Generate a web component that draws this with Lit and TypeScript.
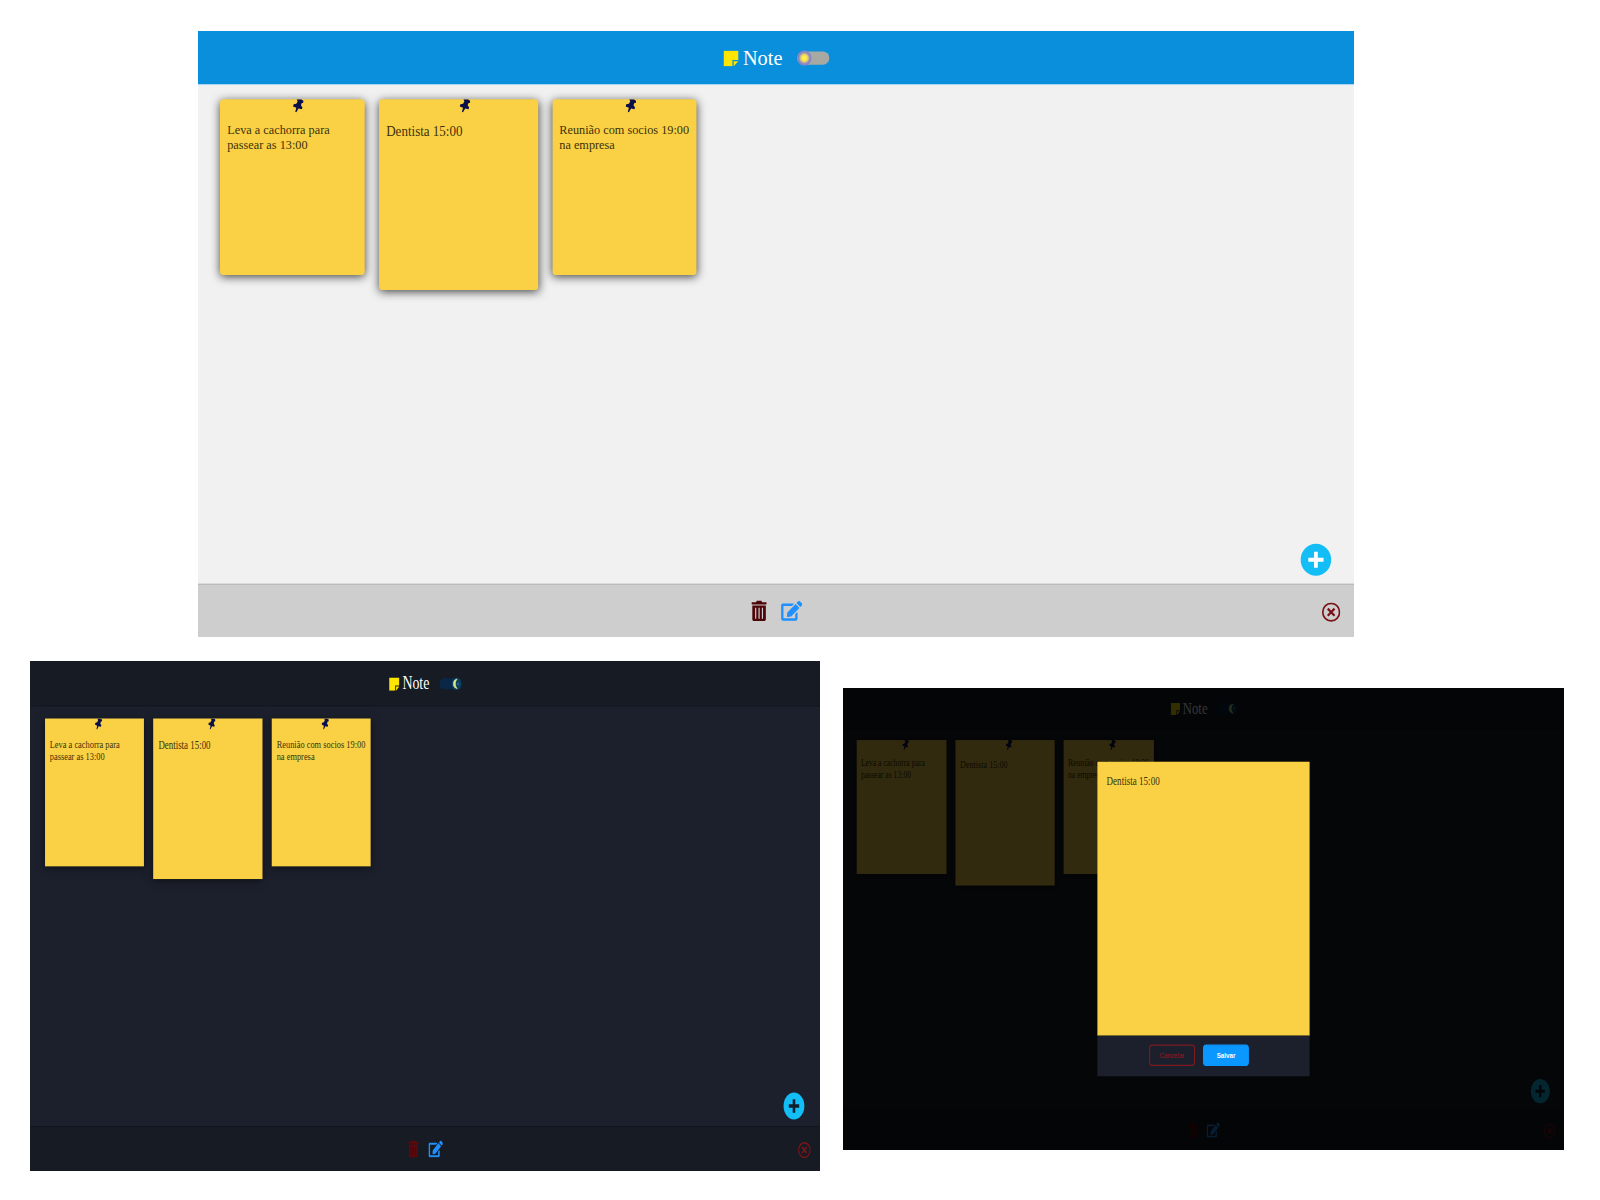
import { LitElement, html, css, svg, nothing } from "lit";
import { customElement, property } from "lit/decorators.js";

interface Note {
  text: string;
  active?: boolean;
}

const NOTES: Note[] = [
  { text: "Leva a cachorra para passear as 13:00" },
  { text: "Dentista 15:00", active: true },
  { text: "Reunião com socios 19:00 na empresa" },
];

const pinIcon = html`<svg class="pin" viewBox="0 0 24 28">
  ${svg`<path d="M8.500 0 L19 0 L24 3.500 L23 8 L20 8 L18 13 L21.500 18 L20 21.500 L12.500 20 L7.500 28 L5 27.500 L7.500 18.500 L0 15.500 L1.500 11 L7.500 9.500 L10.500 4.500 Z" fill="#0b0f4a"/>`}
</svg>`;

const noteIcon = html`<svg class="logo" viewBox="0 0 18 18">
  <path d="M0 0H18V10.8H10.8V18H0Z" fill="#ffe600" />
  <path d="M12.3 12.3H18L12.3 18Z" fill="#ffe600" />
</svg>`;

const trashIcon = html`<svg class="trash" viewBox="0 0 18 23">
  <path d="M0 1.8H5.4L6.4 0H11.6L12.6 1.8H18V4.4H0Z" fill="currentColor" />
  <path
    fill-rule="evenodd"
    fill="currentColor"
    d="M1 5.6H17V21Q17 23 15 23H3Q1 23 1 21ZM4.3 8V20.4H5.7V8ZM8.3 8V20.4H9.7V8ZM12.3 8V20.4H13.7V8Z"
  />
</svg>`;

const editIcon = html`<svg class="edit" viewBox="0 0 576 512">
  <path
    fill="currentColor"
    d="M402.6 83.2l90.2 90.2c3.8 3.8 3.8 10 0 13.8L274.4 405.6l-92.8 10.3c-12.4 1.4-22.9-9.1-21.5-21.5l10.3-92.8L388.8 83.2c3.8-3.8 10-3.8 13.8 0zm162-22.9l-48.8-48.8c-15.2-15.2-39.9-15.2-55.2 0l-35.4 35.4c-3.8 3.8-3.8 10 0 13.8l90.2 90.2c3.8 3.8 10 3.8 13.8 0l35.4-35.4c15.2-15.3 15.2-40 0-55.2zM384 346.2V448H64V128h229.8c3.2 0 6.2-1.3 8.5-3.5l40-40c7.6-7.6 2.2-20.5-8.5-20.5H48C21.5 64 0 85.5 0 112v352c0 26.5 21.5 48 48 48h352c26.5 0 48-21.5 48-48V306.2c0-10.7-12.9-16-20.5-8.5l-40 40c-2.2 2.3-3.5 5.3-3.5 8.5z"
  />
</svg>`;

const closeIcon = html`<svg class="close" viewBox="0 0 22 22">
  <circle cx="11" cy="11" r="9.9" fill="none" stroke="currentColor" stroke-width="2" />
  <path d="M7 7L15 15M15 7L7 15" stroke="currentColor" stroke-width="2.6" />
</svg>`;

@customElement("note-board")
export class NoteBoard extends LitElement {
  @property({ type: Boolean, reflect: true }) dark = false;
  @property({ type: Boolean }) editing = false;

  static styles = css`
    :host {
      display: block;
      overflow: hidden;
      --bar: #0a8fdc;
      --bar-line: #dceaf5;
      --page: #f1f1f1;
      --foot: #cecece;
      --foot-line: #b3b3b3;
      --shadow: rgba(0, 0, 0, 0.7);
      --danger: #4d0509;
      --close: #7a1216;
      --plus: #fff;
      --radius: 4px;
    }
    :host([dark]) {
      --bar: #161b24;
      --bar-line: #11151d;
      --page: #1c202c;
      --foot: #161b24;
      --foot-line: #11151d;
      --shadow: rgba(0, 0, 0, 0.5);
      --danger: #5c080c;
      --close: #7d1418;
      --plus: #11202e;
      --radius: 0;
    }
    * {
      box-sizing: border-box;
    }
    svg {
      display: block;
    }
    .stage {
      position: relative;
      width: 1366px;
      height: 683px;
      transform-origin: 0 0;
      transform: scale(var(--sx), var(--sy));
      display: flex;
      flex-direction: column;
      background: var(--page);
      font-family: "Liberation Serif", serif;
    }
    .bar {
      height: 60px;
      flex: none;
      display: flex;
      align-items: center;
      justify-content: center;
      padding-left: 1px;
      background: var(--bar);
      box-shadow: 0 1px 0 var(--bar-line);
    }
    .logo {
      width: 17.5px;
      height: 18px;
      margin-top: 2px;
    }
    .title {
      margin: 0 17px 0 5px;
      font-size: 24px;
      line-height: 28px;
      color: #fff;
    }
    .toggle {
      width: 38px;
      height: 15px;
      border-radius: 8px;
      display: flex;
      align-items: center;
      background: #a9a9a4;
    }
    .knob {
      width: 17px;
      height: 17px;
      flex: none;
      border-radius: 50%;
      background: radial-gradient(circle, #fff04a 0 16%, #e5cf68 34%, #8d86c4 54%, #6f86d8 100%);
    }
    :host([dark]) .toggle {
      justify-content: flex-end;
      background: #0a2748;
    }
    :host([dark]) .knob {
      background: #0d3f62;
    }
    .knob svg {
      width: 17px;
      height: 17px;
    }
    .notes {
      flex: 1;
      display: flex;
      align-items: flex-start;
      gap: 16.5px;
      padding: 17.4px 25.4px 0 var(--left, 25.4px);
    }
    .note {
      width: 170.9px;
      height: 197.6px;
      padding: 0 7px 0 8.3px;
      border-radius: var(--radius);
      background: #fad145;
      box-shadow: 0 2px 11px var(--shadow);
      color: #3c3208;
      font-size: 14.5px;
      line-height: 17.3px;
    }
    .note.active {
      width: 188.5px;
      height: 214.5px;
      padding-left: 8.8px;
      font-size: 15.4px;
    }
    .pin {
      width: 13px;
      height: 14.5px;
      margin-left: 50%;
    }
    .note p {
      margin: 11.3px 0 0;
    }
    .note.active p {
      margin-top: 12px;
    }
    .foot {
      height: 60.5px;
      flex: none;
      display: grid;
      grid-template-columns: 1fr auto 1fr;
      align-items: center;
      padding-right: 16.5px;
      padding-left: 17.5px;
      background: var(--foot);
      border-top: 1.5px solid var(--foot-line);
    }
    .tools {
      grid-column: 2;
      display: flex;
      gap: 17px;
    }
    .trash {
      width: 18px;
      height: 23px;
      color: var(--danger);
    }
    .edit {
      width: 25px;
      height: 23px;
      color: #1e90ff;
    }
    .close {
      justify-self: end;
      width: 22px;
      height: 22px;
      margin-top: 3px;
      color: var(--close);
    }
    .add {
      position: absolute;
      right: 27px;
      bottom: 69px;
      width: 36px;
      height: 36px;
      border-radius: 50%;
      background: #13bdf5;
      color: var(--plus);
    }
    .overlay {
      position: absolute;
      inset: 0;
      display: flex;
      flex-direction: column;
      align-items: center;
      padding-top: 109.4px;
      background: rgba(0, 0, 0, 0.8);
    }
    .editor {
      width: 402px;
      height: 404.5px;
      padding: 19px 17.3px;
      background: #fad145;
      color: #3c3208;
      font-size: 17.2px;
      line-height: 20px;
    }
    .actions {
      width: 402px;
      height: 60px;
      display: flex;
      align-items: center;
      justify-content: center;
      gap: 15.5px;
      padding: 0 17px 1.5px 0;
      background: #1c202c;
    }
    .button {
      width: 87px;
      height: 32px;
      padding: 0;
      border: 2px solid #7d1a20;
      border-radius: 6px;
      background: transparent;
      color: #981a1f;
      font: 11.8px "Liberation Sans", sans-serif;
    }
    .save {
      border-color: #0a97ff;
      background: #0a97ff;
      color: #fff;
      font-weight: bold;
    }
  `;

  render() {
    return html`
      <div class="stage">
        <header class="bar">
          ${noteIcon}
          <span class="title">Note</span>
          <span class="toggle">
            <span class="knob">
              ${this.dark
                ? html`<svg viewBox="0 0 17 17">
                    <path d="M9.5 2Q3 3 3 8.5T9.5 15Q6.4 12 6.4 8.5T9.5 2Z" fill="#d9e88a" stroke="#d9e88a" />
                    <circle cx="11" cy="8.5" r="1.2" fill="#3f8fa5" />
                  </svg>`
                : nothing}
            </span>
          </span>
        </header>
        <main class="notes">
          ${NOTES.map(
            (n) => html`<article class="note ${n.active ? "active" : ""}">
              ${pinIcon}
              <p>${n.text}</p>
            </article>`
          )}
        </main>
        <footer class="foot">
          <div class="tools">${trashIcon}${editIcon}</div>
          ${closeIcon}
        </footer>
        <svg class="add" viewBox="0 0 36 36">
          <path d="M18 9V27M9 18H27" stroke="currentColor" stroke-width="4.5" />
        </svg>
        ${this.editing
          ? html`<div class="overlay">
              <div class="editor">Dentista 15:00</div>
              <div class="actions">
                <button class="button">Cancelar</button>
                <button class="button save">Salvar</button>
              </div>
            </div>`
          : nothing}
      </div>
    `;
  }
}

@customElement("app-root")
export class AppRoot extends LitElement {
  static styles = css`
    :host {
      display: flex;
      flex-direction: column;
      gap: 24px;
      box-sizing: border-box;
      height: 1200px;
      padding: 31px 0 0;
      background: #fff;
    }
    .light {
      width: 1156px;
      height: 606px;
      margin-left: 198px;
      --sx: 0.84627;
      --sy: 0.88726;
      --left: 26.2px;
    }
    .row {
      display: flex;
      align-items: flex-start;
      gap: 23px;
      padding-left: 30px;
    }
    .night {
      width: 790px;
      height: 510px;
      --sx: 0.57833;
      --sy: 0.74671;
      --left: 25.8px;
    }
    .edit {
      width: 721px;
      height: 462px;
      margin-top: 27px;
      --sx: 0.52782;
      --sy: 0.67643;
      --left: 25.6px;
    }
  `;

  render() {
    return html`
      <note-board class="light"></note-board>
      <div class="row">
        <note-board class="night" dark></note-board>
        <note-board class="edit" dark editing></note-board>
      </div>
    `;
  }
}
